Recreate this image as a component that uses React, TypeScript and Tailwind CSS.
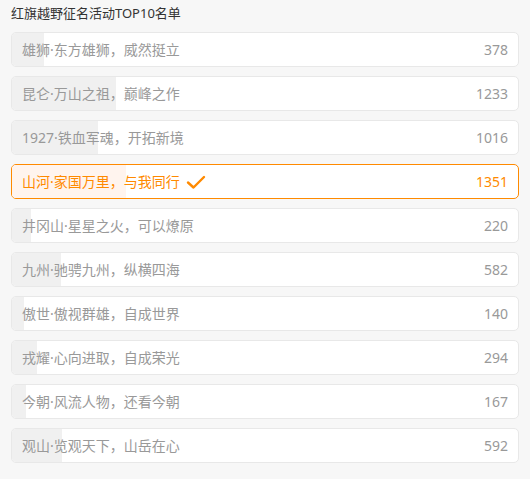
const items = [
  { name: "雄狮·东方雄狮，威然挺立", count: 378 },
  { name: "昆仑·万山之祖，巅峰之作", count: 1233 },
  { name: "1927·铁血军魂，开拓新境", count: 1016 },
  { name: "山河·家国万里，与我同行", count: 1351, selected: true },
  { name: "井冈山·星星之火，可以燎原", count: 220 },
  { name: "九州·驰骋九州，纵横四海", count: 582 },
  { name: "傲世·傲视群雄，自成世界", count: 140 },
  { name: "戎耀·心向进取，自成荣光", count: 294 },
  { name: "今朝·风流人物，还看今朝", count: 167 },
  { name: "观山·览观天下，山岳在心", count: 592 },
];

const total = items.reduce((s, i) => s + i.count, 0);

function Check() {
  return (
    <svg width="20" height="16" viewBox="0 0 20 16" className="ml-1.5">
      <path d="M2 8.5 L7.5 13.5 L18 3" fill="none" stroke="#ff8a00" strokeWidth="2.4" strokeLinecap="round" strokeLinejoin="round" />
    </svg>
  );
}

export default function App() {
  return (
    <div
      className="min-h-[479px] w-[530px] bg-[#f7f7f7] px-[11px] pt-[4px]"
      style={{ fontFamily: '"Noto Sans", "Noto Sans CJK SC", sans-serif' }}
    >
      <h1 className="h-[28px] text-[13px] leading-[18px] text-[#333]">红旗越野征名活动TOP10名单</h1>
      <ul className="flex flex-col gap-[9px]">
        {items.map((it) => (
          <li
            key={it.name}
            className={
              it.selected
                ? "relative flex h-[35px] items-center overflow-hidden rounded-[5px] border border-[#ff8a00] bg-white"
                : "relative flex h-[35px] items-center overflow-hidden rounded-[5px] border border-[#e8e8e8] bg-white"
            }
          >
            <div
              className={
                it.selected
                  ? "absolute inset-y-0 left-0 bg-[#fff4ee]"
                  : "absolute inset-y-0 left-0 bg-[#f0f0f0]"
              }
              style={{ width: `${(it.count / total) * 100}%` }}
            />
            <div
              className={
                it.selected
                  ? "relative flex flex-1 items-center justify-between pl-[10px] pr-[10px] text-[14px] text-[#ff8a00]"
                  : "relative flex flex-1 items-center justify-between pl-[10px] pr-[10px] text-[14px] text-[#999]"
              }
            >
              <span className="flex items-center">
                {it.name}
                {it.selected && <Check />}
              </span>
              <span>{it.count}</span>
            </div>
          </li>
        ))}
      </ul>
    </div>
  );
}
